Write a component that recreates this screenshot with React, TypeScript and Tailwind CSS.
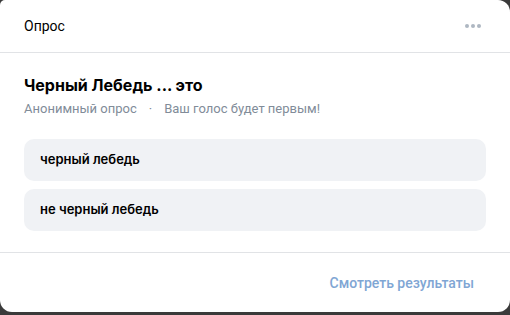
import React from 'react';

const options = ['черный лебедь', 'не черный лебедь'];

const App: React.FC = () => {
  return (
    <div className="w-[510px] h-[315px] bg-[#3a3a3a] overflow-hidden font-['Roboto',_'Liberation_Sans',_sans-serif]">
      <div className="w-[510px] h-[312px] bg-white rounded-tl-[5px] rounded-tr-[12px] rounded-b-[12px] flex flex-col">
        <header className="h-[53px] flex items-center justify-between pl-6 pr-[29px] border-b border-[#e1e3e6] flex-shrink-0">
          <span className="text-[14px] text-black">Опрос</span>
          <span className="flex gap-[2px]">
            <i className="w-[4px] h-[4px] rounded-full bg-[#aeb7c2]" />
            <i className="w-[4px] h-[4px] rounded-full bg-[#aeb7c2]" />
            <i className="w-[4px] h-[4px] rounded-full bg-[#aeb7c2]" />
          </span>
        </header>

        <div className="px-6 pt-[22px] pb-[21px] border-b border-[#e1e3e6]">
          <h2 className="text-[16px] font-bold text-black leading-5 font-['Inter',_sans-serif]">Черный Лебедь ... это</h2>
          <p className="mt-[6px] text-[13px] text-[#818c99] leading-4 flex">
            <span>Анонимный опрос</span>
            <span className="mx-[12px]">·</span>
            <span>Ваш голос будет первым!</span>
          </p>
          <div className="mt-[22px] flex flex-col gap-2">
            {options.map(opt => (
              <div key={opt} className="h-[42px] rounded-[10px] bg-[#f0f2f5] flex items-center px-4">
                <span className="text-[13px] font-semibold text-black font-['Inter',_sans-serif]">{opt}</span>
              </div>
            ))}
          </div>
        </div>

        <footer className="flex-grow flex items-center justify-end pr-[36px] pt-[2px]">
          <span className="text-[14px] font-medium text-[#7fa6d4]">Смотреть результаты</span>
        </footer>
      </div>
    </div>
  );
};

export default App;
